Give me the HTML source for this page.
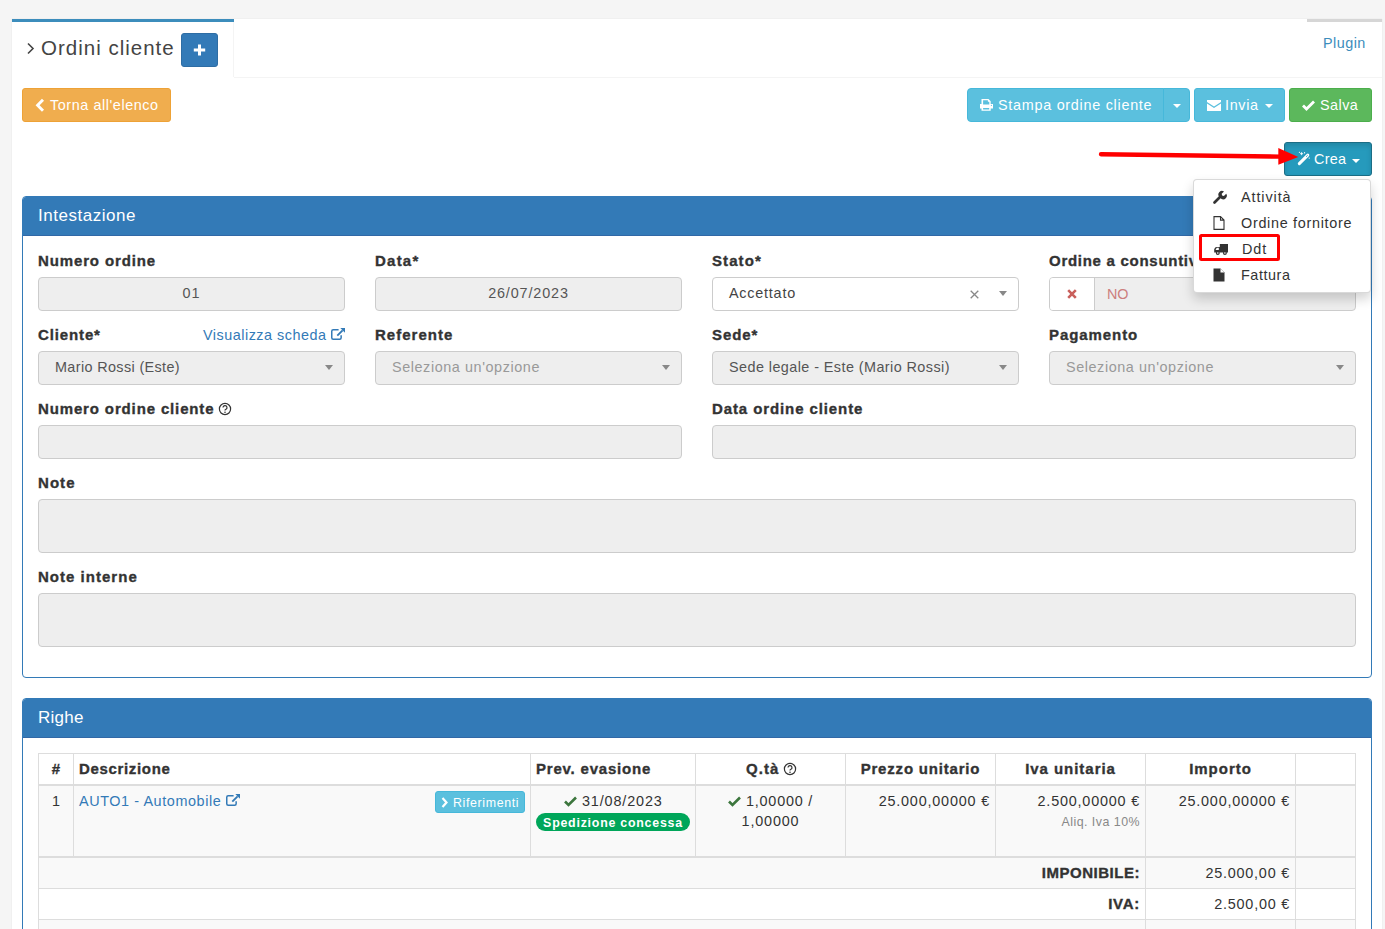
<!DOCTYPE html>
<html><head><meta charset="utf-8">
<style>
*{box-sizing:border-box}
html,body{margin:0;padding:0}
body{width:1385px;height:929px;overflow:hidden;position:relative;background:#f5f5f5;font-family:"Liberation Sans",sans-serif;font-size:14.4px;letter-spacing:0.55px;color:#333;line-height:20px}
.a{position:absolute}
.b{font-weight:bold;letter-spacing:1.1px}
.nw{white-space:nowrap}
svg{display:block}
#box{left:12px;top:19px;width:1370px;height:920px;background:#fff;box-shadow:0 0 1px rgba(0,0,0,.12)}
.btn{position:absolute;height:34px;border-radius:3px;color:#fff;white-space:nowrap;line-height:20px;padding:6px 12px;border:1px solid transparent}
.bwarn{background:#f0ad4e;border-color:#eea236}
.binfo{background:#5bc0de;border-color:#46b8da}
.bsucc{background:#5cb85c;border-color:#4cae4c}
.bprim{background:#337ab7;border-color:#2e6da4}
.panel{position:absolute;left:22px;width:1350px;border:1px solid #337ab7;border-radius:4px;background:#fff}
.ph{height:39px;background:#337ab7;border-bottom:1px solid #3168a6;color:#fff;font-size:17px;letter-spacing:0.45px;line-height:20px;padding:9px 15px 0;border-radius:3px 3px 0 0}
.lbl{position:absolute;font-weight:bold;font-size:15px;letter-spacing:1.05px;-webkit-text-stroke:0.35px currentColor;white-space:nowrap;line-height:20px;color:#333}
.inp{position:absolute;height:34px;border:1px solid #ccc;border-radius:4px;background:#eee;color:#555;line-height:20px;padding:5px 16px;white-space:nowrap}
.caret{position:absolute;width:0;height:0;border-left:4px solid transparent;border-right:4px solid transparent;border-top:5px solid #888}
.ph2{color:#999}
table{border-collapse:collapse}
</style></head><body>
<div id="box" class="a"></div>

<!-- tabs -->
<div class="a" style="left:12px;top:19px;width:222px;height:3px;background:#3c8dbc"></div>
<div class="a" style="left:233px;top:22px;width:1px;height:55px;background:#f4f4f4"></div>
<div class="a" style="left:234px;top:77px;width:1148px;height:1px;background:#f4f4f4"></div>
<div class="a" style="left:1307px;top:19px;width:75px;height:3px;background:#d6d6d6"></div>
<svg class="a" style="left:26px;top:42px" width="9" height="13" viewBox="0 0 9 13"><path d="M2 1.5 L7 6.5 L2 11.5" fill="none" stroke="#444" stroke-width="1.6"></path></svg>
<div class="a nw" style="left: 41px; top: 35px; font-size: 20.5px; letter-spacing: 1px; line-height: 26px; color: rgb(68, 68, 68);">Ordini cliente</div>
<div class="btn bprim" style="left:181px;top:33px;width:37px;padding:0"><svg class="a" style="left:11px;top:10px" width="13" height="12" viewBox="0 0 13 12"><path d="M6.5 0.5v11M0.8 6h11.4" stroke="#fff" stroke-width="3"></path></svg></div>
<div class="a nw" style="left: 1323px; top: 33px; color: rgb(60, 141, 188); letter-spacing: 0.47px;">Plugin</div>

<!-- toolbar -->
<div class="btn bwarn" style="left:22px;top:88px;width:149px;padding-left:13px"><svg class="a" style="left:12px;top:9px" width="10" height="15" viewBox="0 0 10 15"><path d="M8 1.8 L2.6 7.3 L8 12.8" fill="none" stroke="#fff" stroke-width="2.9"></path></svg><span style="position: absolute; left: 27px; top: 6px; letter-spacing: 0.57px;">Torna all'elenco</span></div>

<div class="btn binfo" style="left:967px;top:88px;width:197px;border-radius:4px 0 0 4px">
 <svg class="a" style="left:12px;top:10px" width="14" height="13" viewBox="0 0 14 13"><path fill-rule="evenodd" d="M1.5 0H8.5L10.7 2.2V5H13V9.5H10.7V11.8H1.5V9.5H0V5H1.5Z M3.1 1.2V5.4H9.3V2.8H7.9V1.2Z M3.1 9.1V10.6H9.2V9.1Z" fill="#fff"></path><circle cx="11.4" cy="6.3" r="0.6" fill="#5bc0de"></circle></svg>
 <span style="position: absolute; left: 30px; top: 6px; letter-spacing: 0.72px;">Stampa ordine cliente</span></div>
<div class="btn binfo" style="left:1163px;top:88px;width:27px;border-radius:0 4px 4px 0;border-left-color:#46b8da"><div class="caret" style="left:9px;top:15px;border-top-color:#fff;border-top-width:4px"></div></div>

<div class="btn binfo" style="left:1194px;top:88px;width:91px">
 <svg class="a" style="left:12px;top:11px" width="14" height="11" viewBox="0 0 14 11"><path d="M0 0h14v2l-7 4.5l-7-4.5z M0 3.5l7 4.5l7-4.5v7.5h-14z" fill="#fff"></path></svg>
 <span style="position: absolute; left: 30px; top: 6px; letter-spacing: 0.67px;">Invia</span><div class="caret" style="left:69.5px;top:15px;border-top-color:#fff;border-top-width:4px"></div></div>

<div class="btn bsucc" style="left:1289px;top:88px;width:83px">
 <svg class="a" style="left:12px;top:11px" width="13" height="11" viewBox="0 0 13 11"><path d="M1 5.5l3.5 3.5l7.5-7.5" fill="none" stroke="#fff" stroke-width="2.8"></path></svg>
 <span style="position: absolute; left: 30px; top: 6px; letter-spacing: 0.45px;">Salva</span></div>

<div class="btn" style="left:1284px;top:142px;width:88px;background:#269abc;border-color:#1b6d85;box-shadow:inset 0 3px 5px rgba(0,0,0,.125)">
 <svg class="a" style="left:12px;top:8px" width="15" height="15" viewBox="0 0 15 15"><path d="M2.3 12.6L10.8 4.1" stroke="#fff" stroke-width="3" stroke-linecap="round"></path><path d="M9.2 5.7L10.6 4.3" stroke="#269abc" stroke-width="1"></path><path d="M4.6 1.2v3M3.1 2.7h3M2.4 0.8v1.2M7.6 1v1.5M12.2 6.5v1.3" stroke="#fff" stroke-width="0.9"></path></svg>
 <span style="position: absolute; left: 29px; top: 6px; letter-spacing: 0.3px;">Crea</span><div class="caret" style="left:66.5px;top:15.5px;border-top-color:#fff;border-top-width:4px"></div></div>

<!-- Panel Intestazione -->
<div class="panel" style="top:196px;height:482px">
 <div class="ph" style="letter-spacing: 0.53px;">Intestazione</div>
</div>
<div class="lbl" style="left: 38px; top: 251px; letter-spacing: 0.87px;">Numero ordine</div>
<div class="inp" style="left: 38px; top: 277px; width: 307px; text-align: center; letter-spacing: 0.91px;">01</div>
<div class="lbl" style="left: 375px; top: 251px; letter-spacing: 1.23px;">Data*</div>
<div class="inp" style="left: 375px; top: 277px; width: 307px; text-align: center; letter-spacing: 0.87px;">26/07/2023</div>
<div class="lbl" style="left: 712px; top: 251px; letter-spacing: 1.09px;">Stato*</div>
<div class="inp" style="left: 712px; top: 277px; width: 307px; background: rgb(255, 255, 255); color: rgb(68, 68, 68); letter-spacing: 0.77px;">Accettato
  <svg class="a" style="left:257px;top:12px" width="9" height="9" viewBox="0 0 9 9"><path d="M0.7 0.7l7.6 7.6M8.3 0.7l-7.6 7.6" stroke="#888" stroke-width="1.3"></path></svg>
  <div class="caret" style="left:286px;top:13px"></div></div>
<div class="lbl" style="left: 1049px; top: 251px; letter-spacing: 0.72px;">Ordine a consuntivo</div>
<div class="inp" style="left:1049px;top:277px;width:307px;padding:0;overflow:hidden">
  <div class="a" style="left:0;top:0;width:45px;height:32px;background:#fff;border-right:1px solid #ccc"></div>
  <svg class="a" style="left:17px;top:11px" width="10" height="10" viewBox="0 0 10 10"><path d="M1.2 1.2l7.6 7.6M8.8 1.2l-7.6 7.6" stroke="#c9605c" stroke-width="2.6"></path></svg>
  <span class="a" style="left: 57px; top: 6px; color: rgb(204, 127, 125); letter-spacing: -0.05px;">NO</span>
</div>

<div class="lbl" style="left: 38px; top: 325px; letter-spacing: 0.87px;">Cliente*</div>
<div class="a nw" style="left: 203px; top: 325px; color: rgb(51, 122, 183); letter-spacing: 0.5px;">Visualizza scheda</div>
<svg class="a" style="left:330px;top:327px" width="16" height="14" viewBox="0 0 16 14"><path d="M8.6 2.75H3.2Q1.75 2.75 1.75 4.2V10.7Q1.75 12.15 3.2 12.15H9.7Q11.15 12.15 11.15 10.7V8.2" fill="none" stroke="#337ab7" stroke-width="1.5"></path><path d="M7.3 8.7L12.6 3.4" stroke="#337ab7" stroke-width="1.9"></path><path d="M10.3 1H15V5.7Z" fill="#337ab7"></path></svg>
<div class="inp" style="left: 38px; top: 351px; width: 307px; letter-spacing: 0.37px;">Mario Rossi (Este)<div class="caret" style="left:286px;top:13px"></div></div>
<div class="lbl" style="left: 375px; top: 325px; letter-spacing: 1.02px;">Referente</div>
<div class="inp ph2" style="left: 375px; top: 351px; width: 307px; letter-spacing: 0.58px;">Seleziona un'opzione<div class="caret" style="left:286px;top:13px"></div></div>
<div class="lbl" style="left: 712px; top: 325px; letter-spacing: 0.94px;">Sede*</div>
<div class="inp" style="left: 712px; top: 351px; width: 307px; letter-spacing: 0.43px;">Sede legale - Este (Mario Rossi)<div class="caret" style="left:286px;top:13px"></div></div>
<div class="lbl" style="left: 1049px; top: 325px; letter-spacing: 0.92px;">Pagamento</div>
<div class="inp ph2" style="left: 1049px; top: 351px; width: 307px; letter-spacing: 0.58px;">Seleziona un'opzione<div class="caret" style="left:286px;top:13px"></div></div>

<div class="lbl" style="left: 38px; top: 399px; letter-spacing: 0.86px;">Numero ordine cliente</div>
<svg class="a" style="left:218px;top:402px" width="14" height="14" viewBox="0 0 14 14"><circle cx="7" cy="7" r="5.6" fill="none" stroke="#333" stroke-width="1.2"></circle><path d="M5 5.6a2 2 0 1 1 2.6 1.9c-.5.2-.6.5-.6 1.1" fill="none" stroke="#333" stroke-width="1.2"></path><circle cx="7" cy="10.2" r=".8" fill="#333"></circle></svg>
<div class="inp" style="left:38px;top:425px;width:644px"></div>
<div class="lbl" style="left: 712px; top: 399px; letter-spacing: 0.9px;">Data ordine cliente</div>
<div class="inp" style="left:712px;top:425px;width:644px"></div>

<div class="lbl" style="left: 38px; top: 473px; letter-spacing: 1.05px;">Note</div>
<div class="inp" style="left:38px;top:499px;width:1318px;height:54px"></div>
<div class="lbl" style="left: 38px; top: 567px; letter-spacing: 1.02px;">Note interne</div>
<div class="inp" style="left:38px;top:593px;width:1318px;height:54px"></div>

<!-- Panel Righe -->
<div class="panel" style="top:698px;height:260px">
 <div class="ph" style="letter-spacing: 0.26px;">Righe</div>
</div>


<!-- table -->
<div class="a" style="left:38px;top:753px;width:1318px;height:200px;background:#fff"></div>
<div class="a" style="left:39px;top:786px;width:1316px;height:70px;background:#f9f9f9"></div>
<div class="a" style="left:39px;top:858px;width:1316px;height:30px;background:#f9f9f9"></div>
<div class="a" style="left:39px;top:920px;width:1316px;height:30px;background:#f9f9f9"></div>
<!-- horizontal lines -->
<div class="a" style="left:38px;top:753px;width:1318px;height:1px;background:#ddd"></div>
<div class="a" style="left:38px;top:784px;width:1318px;height:2px;background:#ddd"></div>
<div class="a" style="left:38px;top:856px;width:1318px;height:2px;background:#ddd"></div>
<div class="a" style="left:38px;top:888px;width:1318px;height:1px;background:#ddd"></div>
<div class="a" style="left:38px;top:919px;width:1318px;height:1px;background:#ddd"></div>
<!-- vertical lines -->
<div class="a" style="left:38px;top:753px;width:1px;height:200px;background:#ddd"></div>
<div class="a" style="left:1355px;top:753px;width:1px;height:200px;background:#ddd"></div>
<div class="a" style="left:73px;top:753px;width:1px;height:104px;background:#ddd"></div>
<div class="a" style="left:530px;top:753px;width:1px;height:104px;background:#ddd"></div>
<div class="a" style="left:695px;top:753px;width:1px;height:104px;background:#ddd"></div>
<div class="a" style="left:845px;top:753px;width:1px;height:104px;background:#ddd"></div>
<div class="a" style="left:995px;top:753px;width:1px;height:104px;background:#ddd"></div>
<div class="a" style="left:1145px;top:753px;width:1px;height:200px;background:#ddd"></div>
<div class="a" style="left:1295px;top:753px;width:1px;height:200px;background:#ddd"></div>

<div class="lbl" style="left: 39px; top: 759px; width: 34px; text-align: center; letter-spacing: 0px;">#</div>
<div class="lbl" style="left: 79px; top: 759px; letter-spacing: 0.66px;">Descrizione</div>
<div class="lbl" style="left: 536px; top: 759px; letter-spacing: 0.8px;">Prev. evasione</div>
<div class="lbl" style="left: 746px; top: 759px; letter-spacing: 1.04px;">Q.tà</div>
<svg class="a" style="left:783px;top:762px" width="14" height="14" viewBox="0 0 14 14"><circle cx="7" cy="7" r="5.6" fill="none" stroke="#333" stroke-width="1.2"></circle><path d="M5 5.6a2 2 0 1 1 2.6 1.9c-.5.2-.6.5-.6 1.1" fill="none" stroke="#333" stroke-width="1.2"></path><circle cx="7" cy="10.2" r=".8" fill="#333"></circle></svg>
<div class="lbl" style="left: 846px; top: 759px; width: 149px; text-align: center; letter-spacing: 0.81px;">Prezzo unitario</div>
<div class="lbl" style="left: 996px; top: 759px; width: 149px; text-align: center; letter-spacing: 0.96px;">Iva unitaria</div>
<div class="lbl" style="left: 1146px; top: 759px; width: 149px; text-align: center; letter-spacing: 0.98px;">Importo</div>

<div class="a nw" style="left: 39px; top: 791px; width: 34px; text-align: center; letter-spacing: 0px; color: rgb(51, 51, 51);">1</div>
<div class="a nw" style="left: 79px; top: 791px; color: rgb(51, 122, 183); letter-spacing: 0.59px;">AUTO1 - Automobile</div>
<svg class="a" style="left:225px;top:793px" width="16" height="14" viewBox="0 0 16 14"><path d="M8.6 2.75H3.2Q1.75 2.75 1.75 4.2V10.7Q1.75 12.15 3.2 12.15H9.7Q11.15 12.15 11.15 10.7V8.2" fill="none" stroke="#337ab7" stroke-width="1.5"></path><path d="M7.3 8.7L12.6 3.4" stroke="#337ab7" stroke-width="1.9"></path><path d="M10.3 1H15V5.7Z" fill="#337ab7"></path></svg>
<div class="a nw" style="left:435px;top:791px;width:90px;height:22px;background:#5bc0de;border:1px solid #46b8da;border-radius:3px;color:#fff;font-size:12.4px;letter-spacing:0.45px;line-height:20px">
 <svg class="a" style="left:5px;top:5px" width="8" height="11" viewBox="0 0 8 11"><path d="M1.5 1l4 4.5l-4 4.5" fill="none" stroke="#fff" stroke-width="2.2"></path></svg>
 <span class="a" style="left: 17px; top: 1px; letter-spacing: 0.64px;">Riferimenti</span></div>
<svg class="a" style="left:564px;top:796px" width="13" height="11" viewBox="0 0 13 11"><path d="M1 5.5l3.5 3.5l7.5-7.5" fill="none" stroke="#3c763d" stroke-width="2.6"></path></svg>
<div class="a nw" style="left: 582px; top: 791px; color: rgb(51, 51, 51); letter-spacing: 0.87px;">31/08/2023</div>
<div class="a nw" style="left: 536px; top: 813px; width: 154px; height: 18px; background: rgb(0, 166, 90); border-radius: 9px; color: rgb(255, 255, 255); font-weight: bold; font-size: 12.4px; letter-spacing: 0.76px; line-height: 20px; text-align: center;">Spedizione concessa</div>
<svg class="a" style="left:728px;top:796px" width="13" height="11" viewBox="0 0 13 11"><path d="M1 5.5l3.5 3.5l7.5-7.5" fill="none" stroke="#3c763d" stroke-width="2.6"></path></svg>
<div class="a nw" style="left: 746px; top: 791px; color: rgb(51, 51, 51); letter-spacing: 0.78px;">1,00000 /</div>
<div class="a nw" style="left: 696px; top: 811px; width: 149px; text-align: center; color: rgb(51, 51, 51); letter-spacing: 0.84px;">1,00000</div>
<div class="a nw" style="left: 846px; top: 791px; width: 144px; text-align: right; color: rgb(51, 51, 51); letter-spacing: 0.81px;">25.000,00000 €</div>
<div class="a nw" style="left: 996px; top: 791px; width: 144px; text-align: right; color: rgb(51, 51, 51); letter-spacing: 0.8px;">2.500,00000 €</div>
<div class="a nw" style="left: 996px; top: 813px; width: 144px; text-align: right; color: rgb(136, 136, 136); font-size: 12.4px; letter-spacing: 0.48px; line-height: 18px;">Aliq. Iva 10%</div>
<div class="a nw" style="left: 1146px; top: 791px; width: 144px; text-align: right; color: rgb(51, 51, 51); letter-spacing: 0.81px;">25.000,00000 €</div>
<div class="lbl" style="left: 996px; top: 863px; width: 144px; text-align: right; letter-spacing: 0.52px;">IMPONIBILE:</div>
<div class="a nw" style="left: 1146px; top: 863px; width: 144px; text-align: right; color: rgb(51, 51, 51); letter-spacing: 0.78px;">25.000,00 €</div>
<div class="lbl" style="left: 996px; top: 894px; width: 144px; text-align: right; letter-spacing: 0.73px;">IVA:</div>
<div class="a nw" style="left: 1146px; top: 894px; width: 144px; text-align: right; color: rgb(51, 51, 51); letter-spacing: 0.77px;">2.500,00 €</div>

<!-- arrow -->
<svg class="a" style="left:0;top:0" width="1385" height="200" viewBox="0 0 1385 200"><path d="M1101 154.2 L1280 156.6" stroke="#f00" stroke-width="4.4" stroke-linecap="round"></path><path d="M1278.3 148.1 L1298.3 156.9 L1278.3 164.8 Z" fill="#f00"></path></svg>

<!-- dropdown -->
<div class="a" style="left:1193px;top:179px;width:178px;height:114px;background:#fff;border:1px solid rgba(0,0,0,.15);border-radius:4px;box-shadow:0 6px 12px rgba(0,0,0,.175)"></div>
<svg class="a" style="left:1213px;top:190px" width="14" height="14" viewBox="0 0 14 14"><path d="M1.5 12.5L7 7" stroke="#333" stroke-width="2.6" stroke-linecap="round"></path><path d="M6 6.5a3.6 3.6 0 0 1 5-5l-2.3 2.3l.4 1.8l1.8.4l2.3-2.3a3.6 3.6 0 0 1-5 5z" fill="#333"></path></svg>
<div class="a nw" style="left: 1241px; top: 187px; color: rgb(51, 51, 51); letter-spacing: 0.91px;">Attività</div>
<svg class="a" style="left:1213px;top:216px" width="12" height="14" viewBox="0 0 12 14"><path d="M1 0.6h6.5l3.5 3.5v9.3h-10z M7.5 0.6v3.5h3.5" fill="none" stroke="#333" stroke-width="1.1"></path></svg>
<div class="a nw" style="left: 1241px; top: 213px; color: rgb(51, 51, 51); letter-spacing: 0.7px;">Ordine fornitore</div>
<svg class="a" style="left:1213.5px;top:244px" width="15" height="12" viewBox="0 0 15 12"><path d="M5.8 0H14V8.6H5.8Z M5.8 3H2.6Q1 3 0.2 5.2V8.6H5.8Z" fill="#333"></path><path d="M4.8 3.8H2.8L1.5 5.9H4.8Z" fill="#fff"></path><circle cx="3.8" cy="9" r="2" fill="#333"></circle><circle cx="3.8" cy="9" r="0.8" fill="#fff"></circle><circle cx="10.9" cy="9" r="2" fill="#333"></circle><circle cx="10.9" cy="9" r="0.8" fill="#fff"></circle></svg>
<div class="a nw" style="left: 1242px; top: 239px; color: rgb(51, 51, 51); letter-spacing: 0.92px;">Ddt</div>
<svg class="a" style="left:1213px;top:268px" width="12" height="14" viewBox="0 0 12 14"><path d="M0.5 0.5h7l4 4v9h-11z" fill="#333"></path><path d="M7.5 0.5v4h4" fill="#fff"></path></svg>
<div class="a nw" style="left: 1241px; top: 265px; color: rgb(51, 51, 51); letter-spacing: 0.56px;">Fattura</div>
<div class="a" style="left:1198.6px;top:234.4px;width:81.5px;height:27px;border:3.6px solid #f00;border-radius:2.5px"></div>

</body></html>
